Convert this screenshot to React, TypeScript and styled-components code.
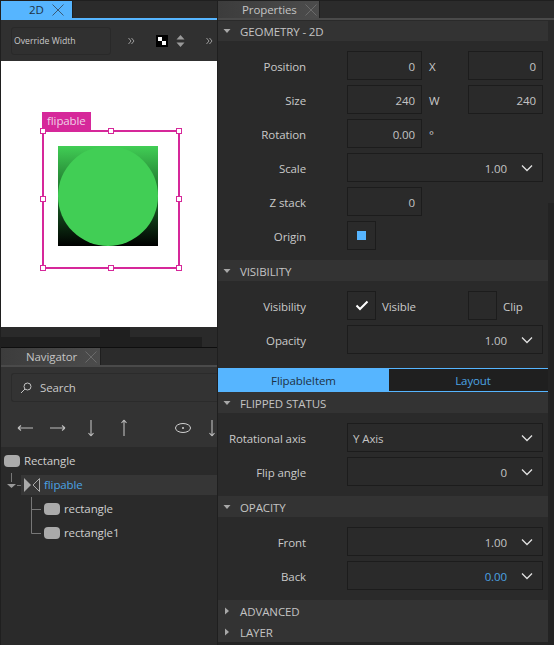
import { createGlobalStyle, styled } from 'styled-components'

const GlobalStyle = createGlobalStyle`
  html, body {
    margin: 0;
    padding: 0;
    background: #2a2a2a;
  }
  * {
    box-sizing: border-box;
  }
`

const Blue = '#56b5ff'
const Magenta = '#d6289a'

const Window = styled.div`
  display: grid;
  grid-template-columns: 218px 336px;
  width: 554px;
  height: 645px;
  overflow: hidden;
  background: #2a2a2a;
  color: #d2d2d2;
  font-family: 'Open Sans', 'Noto Sans', sans-serif;
  font-size: 11.5px;
  letter-spacing: -0.1px;
`

const LeftColumn = styled.div`
  display: flex;
  flex-direction: column;
  height: 645px;
  border-left: 1px solid #1f1f1f;
  border-right: 1px solid #1f1f1f;
`

const RightColumn = styled.div`
  display: flex;
  flex-direction: column;
  height: 645px;
`

const TabBar = styled.div<{ $line: string; $edge: string }>`
  display: flex;
  flex: none;
  height: 20px;
  background: #2b2b2b;
  border-top: 1px solid ${p => p.$edge};
  border-bottom: 2px solid ${p => p.$line};
`

const Tab = styled.div<{ $active?: boolean; $width: number; $pad: number }>`
  display: flex;
  align-items: center;
  width: ${p => p.$width}px;
  padding-left: ${p => p.$pad}px;
  gap: 8px;
  background: ${p => (p.$active ? Blue : 'linear-gradient(90deg, #3c3c3c, #4c4c4c)')};
  color: ${p => (p.$active ? '#1d3245' : '#c4c4c4')};
  border-right: 1px solid #1f1f1f;
`

const CloseIcon = ({ color }: { color: string }) => (
  <svg width="12" height="12" viewBox="0 0 12 12">
    <path d="M0.5 0.5L11.5 11.5M11.5 0.5L0.5 11.5" stroke={color} strokeWidth="1" fill="none" />
  </svg>
)

const Toolbar = styled.div`
  display: flex;
  flex: none;
  align-items: center;
  height: 41px;
  padding-left: 10px;
  background: #303030;
`

const OverrideBox = styled.div`
  display: flex;
  align-items: center;
  width: 100px;
  height: 28px;
  padding-left: 2px;
  border: 1px solid #292929;
  border-radius: 3px;
  color: #c9c9c9;
  font-size: 8.7px;
  letter-spacing: 0;
  white-space: nowrap;
`

const ToolGlyph = styled.svg<{ $gap: number }>`
  flex: none;
  margin-left: ${p => p.$gap}px;
`

const Canvas = styled.div`
  flex: none;
  height: 266px;
  background: #fff;
  position: relative;
`

const Selection = styled.div`
  position: absolute;
  left: 41px;
  top: 69px;
  width: 138px;
  height: 139px;
  border: 2px solid ${Magenta};
`

const SelectionLabel = styled.div`
  position: absolute;
  left: 41px;
  top: 51px;
  width: 49px;
  height: 19px;
  padding-left: 5px;
  background: ${Magenta};
  color: #f0d0e6;
  line-height: 18px;
`

const Handle = styled.div<{ $x: number; $y: number }>`
  position: absolute;
  left: ${p => p.$x}px;
  top: ${p => p.$y}px;
  width: 6px;
  height: 6px;
  background: #fff;
  border: 1px solid ${Magenta};
`

const FlipTarget = styled.div`
  position: absolute;
  left: 57px;
  top: 85px;
  width: 100px;
  height: 100px;
  background: linear-gradient(180deg, #41ce55 0%, #2d9a3e 25%, #14491d 65%, #000 100%);
`

const Disc = styled.div`
  width: 100px;
  height: 100px;
  border-radius: 50%;
  background: #41ce55;
`

const ScrollTrack = styled.div`
  flex: none;
  display: flex;
  height: 10px;
  background: #2a2a2a;
`

const ScrollThumb = styled.div<{ $left: number; $width: number }>`
  width: ${p => p.$width}px;
  margin-left: ${p => p.$left}px;
  background: #1f1f1f;
`

const Navigator = styled.div`
  flex: none;
  display: flex;
  flex-direction: column;
  height: 80px;
  background: #333;
  padding: 6px 0 0 10px;
`

const SearchBox = styled.div`
  display: flex;
  flex: none;
  align-items: center;
  gap: 8px;
  height: 29px;
  padding-left: 8px;
  border: 1px solid #2b2b2b;
  border-right: none;
  border-radius: 3px 0 0 3px;
  color: #c9c9c9;
`

const ArrowRow = styled.div`
  display: flex;
  flex: none;
  align-items: center;
  height: 36px;
  margin-top: 8px;
  overflow: hidden;
`

const Tree = styled.div`
  flex: 1;
  display: flex;
  flex-direction: column;
  padding-top: 1px;
  background: #2a2a2a;
`

const TreeRow = styled.div<{ $indent: number }>`
  display: flex;
  align-items: center;
  gap: 4px;
  height: 24px;
  padding-left: ${p => p.$indent}px;
  color: #cfcfcf;
`

const TreeChip = styled.div`
  flex: none;
  width: 16px;
  height: 12px;
  margin-top: 2px;
  border-radius: 4px;
  background: #aaa;
`

const SelectedRow = styled.div`
  display: flex;
  align-items: center;
  height: 20px;
  margin: 3px 0 1px 20px;
  padding: 0 0 2px 3px;
  gap: 4px;
  background: #363636;
  color: #4ba3e3;
  position: relative;
`

const FlipableIcon = styled.svg`
  flex: none;
  margin-top: 2px;
`

const Expander = styled.svg`
  position: absolute;
  left: -14px;
  top: -2px;
`

const TreeLines = styled.svg`
  position: absolute;
  left: 10px;
  top: 22px;
`

const Scroller = styled.div`
  flex: 1;
  display: flex;
  flex-direction: column;
  margin-top: 1px;
  position: relative;
`

const ScrollHandle = styled.div`
  position: absolute;
  right: 0;
  top: 182px;
  bottom: 0;
  width: 6px;
  background: #232323;
`

const Section = styled.div`
  display: flex;
  flex-direction: column;
`

const SectionHeader = styled.div<{ $height?: number }>`
  display: flex;
  flex: none;
  align-items: center;
  width: 330px;
  height: ${p => p.$height ?? 21}px;
  padding-top: ${p => (p.$height ? 0 : 1)}px;
  background: #333;
  color: #c4c4c4;
`

const Caret = styled.svg`
  flex: none;
  margin: 0 9px 0 5px;
`

const SectionBody = styled.div`
  display: flex;
  flex-direction: column;
  gap: 5px;
  padding: 10px 0;
`

const Row = styled.div`
  display: flex;
  align-items: center;
  height: 29px;
`

const Label = styled.div`
  width: 88px;
  margin-right: 41px;
  padding-top: 2px;
  text-align: right;
  color: #c9c9c9;
  white-space: nowrap;
`

const Field = styled.div<{ $width: number; $blue?: boolean }>`
  display: flex;
  flex: none;
  align-items: center;
  justify-content: flex-end;
  width: ${p => p.$width}px;
  height: 29px;
  padding: 1px 6px 0 5px;
  border: 1px solid #1c1c1c;
  color: ${p => (p.$blue ? '#4ba3e3' : '#c4c4c4')};
`

const Suffix = styled.div`
  width: 46px;
  padding: 2px 0 0 7px;
  color: #c9c9c9;
`

const ChevronGlyph = styled.svg`
  flex: none;
  margin-right: 3px;
`

const ComboText = styled.span<{ $left?: boolean }>`
  flex: 1;
  margin-right: ${p => (p.$left ? 0 : 14)}px;
  text-align: ${p => (p.$left ? 'left' : 'right')};
`

const OriginSwatch = styled.div`
  width: 9px;
  height: 9px;
  background: ${Blue};
`

const IconField = styled.div`
  display: flex;
  flex: none;
  align-items: center;
  justify-content: center;
  width: 29px;
  height: 29px;
  border: 1px solid #1c1c1c;
`

const CheckLabel = styled.div<{ $width: number }>`
  width: ${p => p.$width}px;
  padding: 2px 0 0 6px;
  color: #c9c9c9;
`

const TabSwitch = styled.div`
  display: flex;
  flex: none;
  width: 330px;
  height: 24px;
  margin-top: 4px;
`

const SwitchButton = styled.div<{ $active?: boolean }>`
  display: flex;
  align-items: center;
  justify-content: center;
  flex: ${p => (p.$active ? '0 0 171px' : '1')};
  padding-left: ${p => (p.$active ? 0 : 9)}px;
  background: ${p => (p.$active ? Blue : '#1f1f1f')};
  color: ${p => (p.$active ? '#1d3245' : '#4ba3e3')};
  border-top: 1px solid ${Blue};
  border-bottom: 1px solid ${Blue};
`

const Footer = styled.div`
  flex: 1;
  background: #242424;
`

const TriangleDown = () => (
  <Caret width="8" height="8" viewBox="0 0 8 8">
    <path d="M0.5 2H7.5L4 6Z" fill="#a8a8a8" />
  </Caret>
)

const TriangleRight = () => (
  <Caret width="8" height="8" viewBox="0 0 8 8">
    <path d="M2 0.5V7.5L6 4Z" fill="#a8a8a8" />
  </Caret>
)

const DoubleChevron = ({ gap }: { gap: number }) => (
  <ToolGlyph $gap={gap} width="7" height="8" viewBox="0 0 7 8">
    <path d="M0.5 1L3 4L0.5 7M3.5 1L6 4L3.5 7" stroke="#9a9a9a" fill="none" />
  </ToolGlyph>
)

const Chevron = () => (
  <ChevronGlyph width="12" height="8" viewBox="0 0 12 8">
    <path d="M1 1.5L6 6.5L11 1.5" stroke="#e0e0e0" strokeWidth="1.3" fill="none" />
  </ChevronGlyph>
)

const ValueRow = ({ label, value }: { label: string; value: string }) => (
  <Row>
    <Label>{label}</Label>
    <Field $width={75}>{value}</Field>
  </Row>
)

const PairRow = ({ label, a, axis, b }: { label: string; a: string; axis: string; b: string }) => (
  <Row>
    <Label>{label}</Label>
    <Field $width={75}>{a}</Field>
    <Suffix>{axis}</Suffix>
    <Field $width={75}>{b}</Field>
  </Row>
)

const ComboRow = ({ label, value, blue, left }: { label: string; value: string; blue?: boolean; left?: boolean }) => (
  <Row>
    <Label>{label}</Label>
    <Field $width={196} $blue={blue}>
      <ComboText $left={left}>{value}</ComboText>
      <Chevron />
    </Field>
  </Row>
)

const NavArrow = ({ d, gap }: { d: string; gap: number }) => (
  <ToolGlyph $gap={gap} width="18" height="18" viewBox="0 0 18 18">
    <path d={d} stroke="#bdbdbd" strokeWidth="1.1" fill="none" />
  </ToolGlyph>
)

const App = () => (
  <Window>
    <GlobalStyle />
    <LeftColumn>
      <TabBar $line={Blue} $edge="#1f1f1f">
        <Tab $active $width={72} $pad={28}>
          2D
          <CloseIcon color="#3b5a75" />
        </Tab>
      </TabBar>
      <Toolbar>
        <OverrideBox>Override Width</OverrideBox>
        <DoubleChevron gap={17} />
        <ToolGlyph $gap={21} width="12" height="12" viewBox="0 0 12 12">
          <rect width="12" height="12" fill="#000" />
          <rect x="2" y="2" width="4" height="4" fill="#fff" />
          <rect x="6" y="6" width="4" height="4" fill="#fff" />
        </ToolGlyph>
        <ToolGlyph $gap={8} width="9" height="12" viewBox="0 0 9 12">
          <path d="M4.5 0L8.5 4.5H0.5ZM0.5 7.5H8.5L4.5 12Z" fill="#9a9a9a" />
        </ToolGlyph>
        <DoubleChevron gap={21} />
      </Toolbar>
      <Canvas>
        <SelectionLabel>flipable</SelectionLabel>
        <FlipTarget>
          <Disc />
        </FlipTarget>
        <Selection />
        <Handle $x={39} $y={67} />
        <Handle $x={107} $y={67} />
        <Handle $x={175} $y={67} />
        <Handle $x={39} $y={135} />
        <Handle $x={175} $y={135} />
        <Handle $x={39} $y={204} />
        <Handle $x={107} $y={204} />
        <Handle $x={175} $y={204} />
      </Canvas>
      <ScrollTrack>
        <ScrollThumb $left={99} $width={30} />
      </ScrollTrack>
      <ScrollTrack>
        <ScrollThumb $left={0} $width={201} />
      </ScrollTrack>
      <TabBar $line="#4a4a4a" $edge="#0e0e0e">
        <Tab $width={100} $pad={25}>
          Navigator
          <CloseIcon color="#6a6a6a" />
        </Tab>
      </TabBar>
      <Navigator>
        <SearchBox>
          <svg width="12" height="12" viewBox="0 0 12 12">
            <circle cx="7.5" cy="4.5" r="3.5" stroke="#c4c4c4" fill="none" />
            <path d="M5 7L1 11" stroke="#c4c4c4" fill="none" />
          </svg>
          Search
        </SearchBox>
        <ArrowRow>
          <NavArrow d="M2 9H17M2 9L5 6.5M2 9L5 11.5" gap={5} />
          <NavArrow d="M1 9H16M16 9L13 6.5M16 9L13 11.5" gap={15} />
          <NavArrow d="M9 1V17M9 17L6.5 14M9 17L11.5 14" gap={15} />
          <NavArrow d="M9 1V17M9 1L6.5 4M9 1L11.5 4" gap={15} />
          <ToolGlyph $gap={41} width="18" height="12" viewBox="0 0 18 12">
            <ellipse cx="9" cy="6" rx="7.5" ry="4.5" stroke="#d2d2d2" fill="none" />
            <circle cx="9" cy="6" r="1" fill="#d2d2d2" />
          </ToolGlyph>
          <NavArrow d="M9 1V17M9 17L6.5 14M9 17L11.5 14" gap={11} />
        </ArrowRow>
      </Navigator>
      <Tree>
        <TreeRow $indent={3}>
          <TreeChip />
          Rectangle
        </TreeRow>
        <SelectedRow>
          <Expander width="15" height="16" viewBox="0 0 15 16">
            <path d="M4.5 0V9" stroke="#777" fill="none" />
            <path d="M0 11H9L4.5 15Z" fill="#999" />
            <path d="M10 12.5H14" stroke="#777" fill="none" />
          </Expander>
          <FlipableIcon width="16" height="14" viewBox="0 0 16 14">
            <path d="M0 0L7 7L0 14Z" fill="#aaa" />
            <path d="M15.5 0.5L9 7L15.5 13.5Z" fill="none" stroke="#aaa" />
          </FlipableIcon>
          flipable
          <TreeLines width="11" height="37" viewBox="0 0 11 37">
            <path d="M0.5 0V36.5H10M0.5 12.5H10" stroke="#777" fill="none" />
          </TreeLines>
        </SelectedRow>
        <TreeRow $indent={43}>
          <TreeChip />
          rectangle
        </TreeRow>
        <TreeRow $indent={43}>
          <TreeChip />
          rectangle1
        </TreeRow>
      </Tree>
    </LeftColumn>
    <RightColumn>
      <TabBar $line="#4a4a4a" $edge="#1f1f1f">
        <Tab $width={102} $pad={24}>
          Properties
          <CloseIcon color="#6a6a6a" />
        </Tab>
      </TabBar>
      <Scroller>
        <ScrollHandle />
        <Section>
          <SectionHeader $height={20}>
            <TriangleDown />
            GEOMETRY - 2D
          </SectionHeader>
          <SectionBody>
            <PairRow label="Position" a="0" axis="X" b="0" />
            <PairRow label="Size" a="240" axis="W" b="240" />
            <Row>
              <Label>Rotation</Label>
              <Field $width={75}>0.00</Field>
              <Suffix>°</Suffix>
            </Row>
            <ComboRow label="Scale" value="1.00" />
            <ValueRow label="Z stack" value="0" />
            <Row>
              <Label>Origin</Label>
              <IconField>
                <OriginSwatch />
              </IconField>
            </Row>
          </SectionBody>
        </Section>
        <Section>
          <SectionHeader>
            <TriangleDown />
            VISIBILITY
          </SectionHeader>
          <SectionBody>
            <Row>
              <Label>Visibility</Label>
              <IconField>
                <svg width="14" height="11" viewBox="0 0 14 11">
                  <path d="M1.5 5.5L5 9L12.5 1.5" stroke="#fff" strokeWidth="2" fill="none" />
                </svg>
              </IconField>
              <CheckLabel $width={92}>Visible</CheckLabel>
              <IconField />
              <CheckLabel $width={50}>Clip</CheckLabel>
            </Row>
            <ComboRow label="Opacity" value="1.00" />
          </SectionBody>
        </Section>
        <TabSwitch>
          <SwitchButton $active>FlipableItem</SwitchButton>
          <SwitchButton>Layout</SwitchButton>
        </TabSwitch>
        <Section>
          <SectionHeader>
            <TriangleDown />
            FLIPPED STATUS
          </SectionHeader>
          <SectionBody>
            <ComboRow label="Rotational axis" value="Y Axis" left />
            <ComboRow label="Flip angle" value="0" />
          </SectionBody>
        </Section>
        <Section>
          <SectionHeader>
            <TriangleDown />
            OPACITY
          </SectionHeader>
          <SectionBody>
            <ComboRow label="Front" value="1.00" />
            <ComboRow label="Back" value="0.00" blue />
          </SectionBody>
        </Section>
        <SectionHeader>
          <TriangleRight />
          ADVANCED
        </SectionHeader>
        <SectionHeader>
          <TriangleRight />
          LAYER
        </SectionHeader>
        <Footer />
      </Scroller>
    </RightColumn>
  </Window>
)

export default App
